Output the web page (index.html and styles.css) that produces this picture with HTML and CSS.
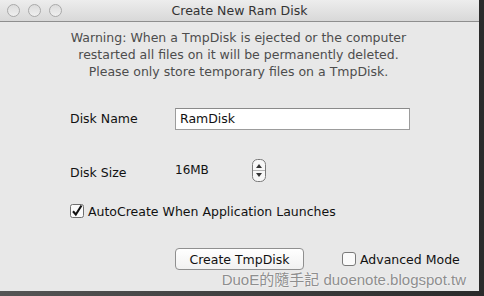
FILE: index.html
```html
<!DOCTYPE html>
<html>
<head>
<meta charset="utf-8">
<link rel="stylesheet" href="styles.css">
</head>
<body>
<div class="window">
  <div class="titlebar">
    <div class="lights">
      <span class="light"></span><span class="light"></span><span class="light"></span>
    </div>
    <div class="title">Create New Ram Disk</div>
  </div>
  <div class="content">
    <p class="warning">Warning: When a TmpDisk is ejected or the computer<br>restarted all files on it will be permanently deleted.<br>Please only store temporary files on a TmpDisk.</p>
    <div class="form">
      <div class="row row-name">
        <span class="label">Disk Name</span>
        <div class="input">RamDisk</div>
      </div>
      <div class="row row-size">
        <span class="label label-size">Disk Size</span>
        <span class="size">16MB</span>
        <svg class="stepper" width="14" height="23" viewBox="0 0 14 23">
          <rect x="0.5" y="0.5" width="13" height="22" rx="5" fill="#f7f7f7" stroke="#7a7a7a"/>
          <line x1="1" y1="11.5" x2="13" y2="11.5" stroke="#b5b5b5"/>
          <polygon points="7,5 10,9 4,9" fill="#333"/>
          <polygon points="4,14 10,14 7,18" fill="#333"/>
        </svg>
      </div>
      <div class="row row-auto">
        <svg class="check" width="14" height="14" viewBox="0 0 14 14">
          <rect x="0.5" y="0.5" width="13" height="13" rx="2" fill="#fafafa" stroke="#6f6f6f"/>
          <path d="M3 7.2 L5.8 10.5 L11.5 1.5" fill="none" stroke="#111" stroke-width="2.1"/>
        </svg>
        <span class="label">AutoCreate When Application Launches</span>
      </div>
      <div class="row row-buttons">
        <button class="btn">Create TmpDisk</button>
        <div class="adv">
          <svg class="check" width="14" height="14" viewBox="0 0 14 14">
            <rect x="0.5" y="0.5" width="13" height="13" rx="2.5" fill="#fafafa" stroke="#7a7a7a"/>
          </svg>
          <span class="label">Advanced Mode</span>
        </div>
      </div>
    </div>
    <div class="watermark">DuoE的隨手記 duoenote.blogspot.tw</div>
  </div>
</div>
</body>
</html>
```
FILE: styles.css
```css
html, body {
  margin: 0;
  padding: 0;
}
body {
  width: 484px;
  height: 296px;
  background: linear-gradient(to right, #555 0, #2a2a2a 100%);
  font-family: "DejaVu Sans", "Noto Sans CJK TC", sans-serif;
  overflow: hidden;
}
.window {
  width: 479px;
  height: 291px;
  background: #e8e8e8;
  display: flex;
  flex-direction: column;
  position: relative;
}
.titlebar {
  height: 21px;
  border-bottom: 1px solid #8e8e8e;
  background: linear-gradient(to bottom, #ededed 0%, #d8d8d8 100%);
  display: flex;
  align-items: center;
  position: relative;
}
.lights {
  display: flex;
  gap: 8px;
  padding-left: 7px;
}
.light {
  width: 11px;
  height: 11px;
  border-radius: 50%;
  border: 1px solid #a9a9a9;
  background: linear-gradient(to bottom, #dcdcdc, #efefef);
}
.title {
  position: absolute;
  left: 0;
  right: 0;
  text-align: center;
  font-size: 12.5px;
  color: #333;
  top: 3px;
}
.content {
  flex: 1;
  display: flex;
  flex-direction: column;
  position: relative;
}
.warning {
  margin: 7px 0 0 0;
  text-align: center;
  font-size: 12.5px;
  line-height: 17px;
  color: #4d4d4d;
  padding-right: 2px;
}
.form {
  padding-left: 70px;
  display: flex;
  flex-direction: column;
}
.row {
  display: flex;
  align-items: center;
}
.label {
  font-size: 12.5px;
  color: #111;
}
.row-name {
  margin-top: 28px;
  height: 22px;
}
.row-name .label {
  width: 105px;
  margin-top: -2px;
}
.input {
  width: 229px;
  height: 20px;
  border: 1px solid #9c9c9c;
  border-top-color: #8a8a8a;
  background: #fff;
  font-size: 12.5px;
  line-height: 20px;
  padding-left: 4px;
  color: #111;
}
.row-size {
  margin-top: 29px;
  height: 23px;
}
.label-size {
  width: 105px;
  margin-top: 3px;
}
.size {
  font-size: 12px;
  color: #111;
  width: 77px;
  margin-top: -1px;
}
.row-auto {
  margin-top: 21px;
  height: 16px;
  gap: 4px;
}
.check {
  display: block;
  flex: none;
}
.row-buttons {
  margin-top: 29px;
  height: 22px;
  padding-left: 105px;
}
.btn {
  width: 129px;
  height: 22px;
  border: 1px solid #8f8f8f;
  border-radius: 4px;
  background: linear-gradient(to bottom, #ffffff, #f1f1f1);
  font-family: "DejaVu Sans", sans-serif;
  font-size: 12.5px;
  color: #111;
  padding: 0;
  margin: 0;
}
.adv {
  display: flex;
  align-items: center;
  gap: 4px;
  margin-left: 38px;
}
.watermark {
  position: absolute;
  right: 13px;
  bottom: 2px;
  font-family: "Liberation Sans", "Noto Sans CJK TC", sans-serif;
  font-size: 15px;
  color: #8e8e8e;
  text-shadow: 0 0 2px #fff;
}
```
